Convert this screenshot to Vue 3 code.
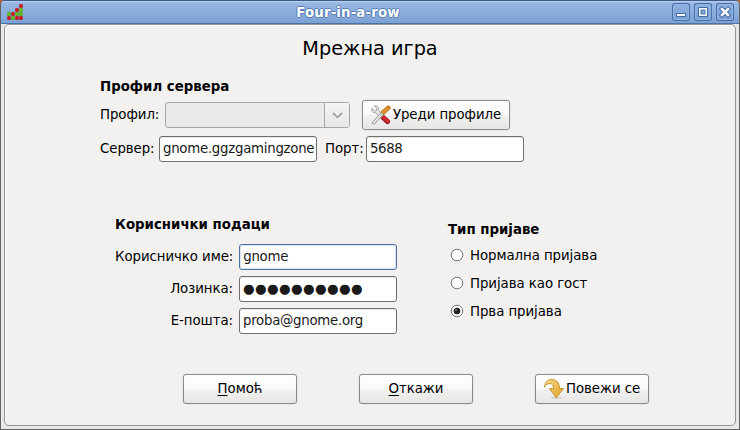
<script setup>
import { ref } from 'vue'

const colors = { r: '#d8141c', g: '#66c21a' }
const pieces = [
  { x: 14, y: 2, c: 'r' },
  { x: 10, y: 6, c: 'r' }, { x: 14, y: 6, c: 'g' },
  { x: 2, y: 10, c: 'g' }, { x: 6, y: 10, c: 'r' }, { x: 10, y: 10, c: 'g' }, { x: 14, y: 10, c: 'g' },
  { x: 2, y: 14, c: 'r' }, { x: 6, y: 14, c: 'g' }, { x: 10, y: 14, c: 'r' }, { x: 14, y: 14, c: 'r' },
]
const account = [
  { id: 'user', label: 'Корисничко име:', value: 'gnome' },
  { id: 'pass', label: 'Лозинка:', value: '●●●●●●●●●●' },
  { id: 'mail', label: 'Е-пошта:', value: 'proba@gnome.org' },
]
const logins = [
  { id: 'normal', label: 'Нормална пријава' },
  { id: 'guest', label: 'Пријава као гост' },
  { id: 'first', label: 'Прва пријава' },
]
const login = ref('first')
</script>

<template>
  <div class="desktop">
    <div class="window">
      <header class="titlebar">
        <svg class="app-icon" width="16" height="16" viewBox="0 0 16 16">
          <g v-for="(p, i) in pieces" :key="i">
            <circle :cx="p.x" :cy="p.y" r="1.9" :fill="colors[p.c]" :stroke="p.c === 'r' ? '#8e1c22' : '#3f8c1c'" stroke-opacity=".75" stroke-width=".5" />
          </g>
        </svg>
        <h1 class="title">Four-in-a-row</h1>
        <div class="controls">
          <span class="control">
            <svg width="18" height="18" viewBox="0 0 18 18"><rect x="4.5" y="10.5" width="9" height="3" fill="#fff" stroke="#446da5" /></svg>
          </span>
          <span class="control">
            <svg width="18" height="18" viewBox="0 0 18 18"><path d="M4.500 4.500h9v9h-9z" fill="#edf3fc" stroke="#446da5" /><path d="M7 7h4v4H7z" fill="#7ea4d8" stroke="#446da5" stroke-width=".8" /></svg>
          </span>
          <span class="control">
            <svg width="18" height="18" viewBox="0 0 18 18"><path d="M6 6l6 6M12 6l-6 6" stroke="#446da5" stroke-width="4.6" stroke-linecap="square" /><path d="M6 6l6 6M12 6l-6 6" stroke="#f2f6fd" stroke-width="2.6" stroke-linecap="square" /></svg>
          </span>
        </div>
      </header>

      <main class="frame">
        <h2 class="heading">Мрежна игра</h2>

        <section class="server">
          <h3 class="group-title">Профил сервера</h3>
          <div class="row profile">
            <label class="l-profile">Профил:</label>
            <div class="combo">
              <div class="combo-value"></div>
              <div class="combo-arrow">
                <svg width="11" height="7" viewBox="0 0 11 7"><path d="M1 1l4.500 4.300L10 1" fill="none" stroke="#a3a29f" stroke-width="1.8" /></svg>
              </div>
            </div>
            <button class="btn edit">
              <svg width="20" height="20" viewBox="0 0 20 20">
                <path d="M17.200 2.900L11.600 8" stroke="#b66a12" stroke-width="4.600" stroke-linecap="round" />
                <path d="M17 3L11.600 8" stroke="#e0942f" stroke-width="3.200" stroke-linecap="round" />
                <path d="M12 12.300l4.600 4.300" stroke="#9c1a20" stroke-width="5" stroke-linecap="round" />
                <path d="M12.300 12l4.400 4.200" stroke="#d02a33" stroke-width="3" stroke-linecap="round" />
                <path d="M3.300.9l2.600 2.600-.4 2-2 .4L.9 3.300C.2 5.800 1.800 8.200 4.800 7.800l5 5 2.600-2.600-4.700-4.600C8.400 2.600 6 .3 3.300.9z" fill="#e6e7e4" stroke="#8e908d" stroke-width=".8" />
                <path d="M10.600 9.400l-8 8.400" stroke="#8e908d" stroke-width="3.200" stroke-linecap="round" />
                <path d="M10.600 9.400l-8 8.400" stroke="#eeeeec" stroke-width="1.700" stroke-linecap="round" />
              </svg>
              <span>Уреди профиле</span>
            </button>
          </div>
          <div class="row address">
            <label class="l-server">Сервер:</label>
            <div class="entry host">gnome.ggzgamingzone</div>
            <label class="l-port">Порт:</label>
            <div class="entry port">5688</div>
          </div>
        </section>

        <div class="columns">
          <section class="account">
            <h3 class="group-title">Кориснички подаци</h3>
            <div v-for="f in account" :key="f.id" class="field">
              <label>{{ f.label }}</label>
              <div class="entry" :class="[f.id, { focused: f.id === 'user' }]">{{ f.value }}</div>
            </div>
          </section>
          <section class="login">
            <h3 class="group-title">Тип пријаве</h3>
            <div v-for="o in logins" :key="o.id" class="option" @click="login = o.id">
              <svg width="14" height="14" viewBox="0 0 14 14">
                <circle cx="7" cy="7" r="5.8" fill="#fff" stroke="#777572" stroke-width="1" />
                <g v-if="login === o.id">
                  <circle cx="7" cy="7" r="3.300" fill="#222" />
                  <circle cx="6" cy="6" r=".9" fill="#858585" />
                </g>
              </svg>
              <span>{{ o.label }}</span>
            </div>
          </section>
        </div>

        <footer class="actions">
          <button class="btn"><span><u>П</u>омоћ</span></button>
          <button class="btn"><span><u>О</u>ткажи</span></button>
          <button class="btn connect">
            <svg width="20" height="20" viewBox="0 0 20 20">
              <defs>
                <linearGradient id="gold" x1="0" y1="0" x2="1" y2="1">
                  <stop offset="0" stop-color="#f9dc8c" /><stop offset="1" stop-color="#dfa01f" />
                </linearGradient>
              </defs>
              <ellipse cx="12.5" cy="18.8" rx="6" ry="1" fill="#000" opacity=".1" />
              <path d="M.6 8.200C1 3.400 3.500.6 7.200.6c4.800 0 8.300 2.600 8.300 9h4L12.300 18.800 5.500 9.600h4.200C9.800 6.300 8 4.300 5.500 4.500 3.200 4.700 1.500 6 .6 8.200z" fill="url(#gold)" stroke="#c08a1e" stroke-width=".9" stroke-linejoin="round" />
            </svg>
            <span>Повежи се</span>
          </button>
        </footer>
      </main>
    </div>
  </div>
</template>

<style>
body { margin: 0; overflow: hidden; }
</style>

<style scoped>
* { box-sizing: border-box; }
.desktop {
  width: 740px; height: 430px; background: #b5643c;
  font: 13.33px/18px "DejaVu Sans", sans-serif; color: #000;
}
.window {
  display: flex; flex-direction: column; height: 430px; overflow: hidden;
  border: 1px solid #666462; border-top-color: #3f5c88; border-radius: 5px 5px 0 0;
  background: #e9e8e6;
}
.titlebar {
  display: grid; grid-template-columns: 20px 1fr 66px; align-items: center;
  height: 23px; flex: none; margin: 0 -1px; padding: 0 5px 0 7px;
  background: linear-gradient(#a2c0e8 0, #97b7e3 8%, #8aaedc 50%, #7ba1d4 100%);
  border: 1px solid #5878a8; border-top-color: #b4cdee; border-bottom-color: #4c71a5;
  border-radius: 4px 4px 0 0;
}
.app-icon { margin: 0 0 1px -1px; }
.title {
  margin: 0; text-align: center; color: #fff; font-size: 13.33px; line-height: 20px;
  letter-spacing: .14px;
  text-shadow: 1px 0 #587fb5, -1px 0 #587fb5, 0 1px #587fb5, 0 -1px #587fb5;
}
.controls { display: flex; gap: 4px; justify-content: flex-end; margin-bottom: 2px; }
.control {
  width: 18px; height: 18px; border-radius: 3px; box-shadow: inset 0 0 0 1px #446da5, inset 0 0 0 2px #94b5e2;
  background: linear-gradient(#92b4e2, #759bd0);
}
.control svg { display: block; }
.frame {
  flex: 1; margin: 0 3px 3px; padding-top: 10px;
  border: 1px solid #979592; border-radius: 5px; background: #f2f1f0;
  box-shadow: inset 1px 1px #fff;
}
.heading { margin: 0; font-size: 19.3px; font-weight: 400; line-height: 28px; text-align: center; }
.group-title { margin: 0; font-size: 13.33px; line-height: 18px; font-weight: 700; white-space: nowrap; }
label, .option span, .btn span { white-space: nowrap; letter-spacing: -.06px; }
.server { margin: 15px 0 0 95px; }
.row { display: flex; align-items: center; }
.profile { height: 30px; margin-top: 4px; }
.l-profile { width: 65px; }
.combo { display: flex; width: 185px; height: 26px; margin-right: 12px; border: 1px solid #aaa8a5; border-radius: 3px; background: #ebeae9; }
.combo-value { flex: 1; }
.combo-arrow { display: grid; place-items: center; width: 25px; border-left: 1px solid #aaa8a5; background: linear-gradient(#f5f4f3, #e8e7e5); }
.btn {
  display: flex; align-items: center; justify-content: center; width: 114px; height: 30px; padding: 0;
  border: 1px solid #8d8a87; border-radius: 3px; color: #000;
  font: inherit; background: linear-gradient(#fff, #f9f9f9 48%, #f1f1f0 52%, #e7e6e5);
  box-shadow: 0 0 0 1px #e9e8e6;
}
.btn u { text-underline-offset: 2px; text-decoration-thickness: 1px; }
.edit { width: 148px; gap: 2px; }
.entry {
  width: 158px; height: 26px; padding: 0 0 0 3px; line-height: 24px; overflow: hidden; white-space: nowrap;
  border: 1px solid #716e6b; border-radius: 3px; background: #fff; color: #1a1a1a;
  box-shadow: inset 0 1px #e8e8e7;
}
.host { letter-spacing: -.27px; }
.port { letter-spacing: -.4px; }
.user { letter-spacing: -.3px; }
.mail { letter-spacing: -.28px; }
.pass { letter-spacing: .38px; }
.focused { border-color: #496fa5; box-shadow: inset 0 0 0 1px #dce6f3; }
.address { margin-top: 6px; }
.l-server { width: 59px; }
.l-port { width: 41px; margin-left: 8px; }
.columns { display: flex; justify-content: space-between; width: 492px; margin: 54px 0 0 110px; }
.account { width: 282px; }
.field { display: flex; justify-content: flex-end; align-items: center; gap: 6px; height: 26px; margin-bottom: 6px; }
.account .group-title { margin-bottom: 10px; }
.login { width: 159px; padding-top: 5px; }
.login .group-title { margin-bottom: 2px; }
.option { display: flex; align-items: center; gap: 6px; height: 28px; padding-left: 2px; }
.option span { padding-top: 1px; }
.actions { display: flex; gap: 62px; margin: 34px 0 0 178px; }
.connect { gap: 2px; }
</style>
